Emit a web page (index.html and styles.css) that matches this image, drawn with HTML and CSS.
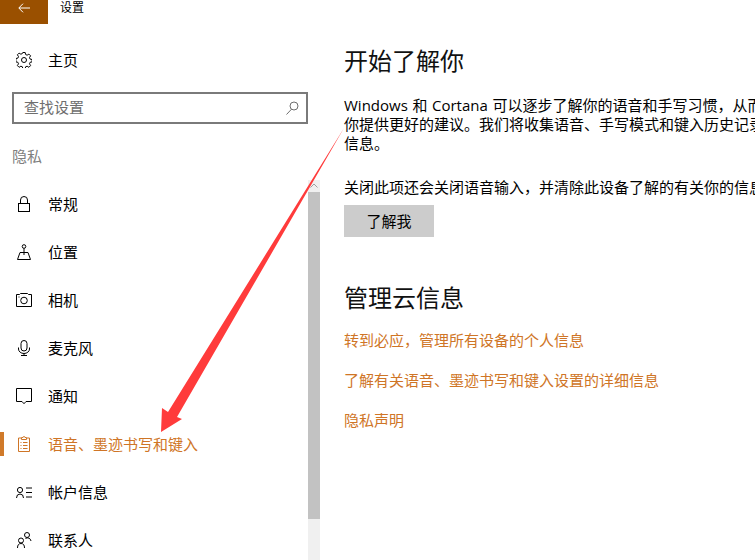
FILE: index.html
```html
<!DOCTYPE html>
<html lang="zh-CN">
<head>
    <meta charset="UTF-8">
    <meta name="viewport" content="width=device-width, initial-scale=1.0">
    <title>设置</title>
    <link rel="stylesheet" href="styles.css">
</head>
<body>
    <div class="window">
        <aside class="sidebar">
            <div class="titlebar">
                <div class="back-btn">
                    <svg width="12" height="10" viewBox="0 0 12 10"><path d="M12 5H1M5 .7L.8 5L5 9.3"/></svg>
                </div>
                <div class="app-title">设置</div>
            </div>

            <div class="home-row">
                <svg class="icon" viewBox="0 0 16 16"><path d="M6.8.5h2.4l.4 2 1.5.7 1.8-1.1 1.7 1.7-1.1 1.8.6 1.5 2 .4v2.4l-2 .4-.6 1.5 1.1 1.8-1.7 1.7-1.8-1.1-1.5.6-.4 2H6.8l-.4-2-1.5-.6-1.8 1.1-1.7-1.7 1.1-1.8-.6-1.5-2-.4V6.500l2-.4.6-1.500-1.100-1.800 1.700-1.700 1.800 1.100 1.500-.7z"/><circle cx="8" cy="8" r="2.500"/></svg>
                <span>主页</span>
            </div>

            <div class="search-box">
                <span>查找设置</span>
                <svg width="13" height="14" viewBox="0 0 13 14"><circle cx="8" cy="5" r="4"/><path d="M5.500 8.200L.5 13.500"/></svg>
            </div>

            <div class="group-label">隐私</div>

            <div class="nav-wrap">
                <ul class="nav-list">
                    <li class="nav-item">
                        <svg class="icon" viewBox="0 0 16 16"><rect x="2.500" y="7.500" width="11" height="8"/><path d="M4.500 7.500V4a3.500 3.500 0 0 1 7 0v3.500"/></svg>
                        <span>常规</span>
                    </li>
                    <li class="nav-item">
                        <svg class="icon" viewBox="0 0 16 16"><circle cx="8" cy="2.500" r="1.800"/><path d="M8 4.300V11M4 8.500h8l2.500 7H1.500z"/></svg>
                        <span>位置</span>
                    </li>
                    <li class="nav-item">
                        <svg class="icon" viewBox="0 0 16 16"><path d="M.5 2.500h3l1-1h7l1 1h3v12H.5z"/><circle cx="8" cy="8.500" r="3.300"/><path d="M2.500 5h1"/></svg>
                        <span>相机</span>
                    </li>
                    <li class="nav-item">
                        <svg class="icon" viewBox="0 0 16 16"><rect x="5" y=".5" width="6" height="10.500" rx="3"/><path d="M2.500 7.500v1.500a5.500 4.500 0 0 0 11 0V7.500M8 13.500v2M5 15.500h6"/></svg>
                        <span>麦克风</span>
                    </li>
                    <li class="nav-item">
                        <svg class="icon" viewBox="0 0 16 16"><path d="M.5.500h15v13H10l-2 2.200-2-2.200H.5z"/></svg>
                        <span>通知</span>
                    </li>
                    <li class="nav-item active">
                        <svg class="icon" viewBox="0 0 16 16"><path d="M5 2H2.500v13.500h11V2H11M5.500 3.500V1.500h1.500a1 1 0 0 1 2 0h1.500v2z"/><path d="M4.500 6.500h1M7 6.500h4.500M4.500 9.500h1M7 9.500h4.500M4.500 12.500h1M7 12.500h4.500"/></svg>
                        <span>语音、墨迹书写和键入</span>
                    </li>
                    <li class="nav-item">
                        <svg class="icon" viewBox="0 0 16 16"><circle cx="4" cy="6" r="2.600"/><path d="M.5 14a3.500 4 0 0 1 7 0M10 4h6M10 8.500h6M10 13h6"/></svg>
                        <span>帐户信息</span>
                    </li>
                    <li class="nav-item">
                        <svg class="icon" viewBox="0 0 16 16"><circle cx="11" cy="3" r="2.500"/><circle cx="5" cy="8.500" r="2.500"/><path d="M1.500 16a3.500 4.500 0 0 1 7 0M9.500 6.500a3.500 3.500 0 0 1 5.500 2.500"/></svg>
                        <span>联系人</span>
                    </li>
                </ul>
                <div class="scrollbar">
                    <div class="scroll-up">
                        <svg width="8" height="5" viewBox="0 0 8 5"><path d="M.5 4.500L4 1l3.500 3.500"/></svg>
                    </div>
                    <div class="scroll-thumb"></div>
                </div>
            </div>
        </aside>

        <main class="content">
            <h2 class="first">开始了解你</h2>
            <p class="intro">Windows 和 Cortana 可以逐步了解你的语音和手写习惯，从而为<br>你提供更好的建议。我们将收集语音、手写模式和键入历史记录等<br>信息。</p>
            <p class="note">关闭此项还会关闭语音输入，并清除此设备了解的有关你的信息</p>
            <button class="action-btn">了解我</button>

            <h2 class="second">管理云信息</h2>
            <a class="link" href="#">转到必应，管理所有设备的个人信息</a>
            <a class="link" href="#">了解有关语音、墨迹书写和键入设置的详细信息</a>
            <a class="link" href="#">隐私声明</a>
        </main>

        <!-- 红色箭头标注 -->
        <svg class="arrow" width="755" height="560" viewBox="0 0 755 560">
            <path d="M344 128L177 417L182 419L161 432L162 408L168 412Z"/>
        </svg>
    </div>
</body>
</html>
```

FILE: styles.css
```css
* {
    margin: 0;
    padding: 0;
    box-sizing: border-box;
}
html, body {
    height: 100%;
    overflow: hidden;
    background-color: #fff;
}
body {
    font-family: "Open Sans", "Noto Sans CJK SC", sans-serif;
    font-size: 15px;
    color: #000;
}
svg {
    fill: none;
    stroke: currentColor;
    stroke-width: 1;
    flex-shrink: 0;
}
.window {
    position: relative;
    display: flex;
    width: 755px;
    height: 560px;
    overflow: hidden;
}
.sidebar {
    display: flex;
    flex-direction: column;
    width: 320px;
    flex-shrink: 0;
}
.titlebar {
    display: flex;
    height: 24px;
}
.back-btn {
    display: flex;
    justify-content: center;
    padding-top: 3px;
    width: 48px;
    height: 24px;
    background-color: #9a5000;
    color: #fff;
}
.app-title {
    margin-left: 12px;
    font-size: 12px;
    line-height: 16px;
}
.home-row {
    display: flex;
    align-items: center;
    height: 48px;
    margin-top: 12px;
    padding-left: 16px;
}
.icon {
    width: 16px;
    height: 16px;
    margin-right: 16px;
}
.home-row span,
.nav-item span {
    margin-top: -2px;
}
.search-box {
    display: flex;
    justify-content: space-between;
    align-items: center;
    width: 296px;
    height: 32px;
    margin: 8px 0 0 12px;
    padding: 0 7px 0 10px;
    border: 2px solid #7a7a7a;
    color: #6e6e6e;
}
.search-box span {
    margin-top: -3px;
}
.group-label {
    margin: 22px 0 0 12px;
    height: 34px;
    line-height: 20px;
    color: #808080;
}
.nav-wrap {
    display: flex;
    flex: 1;
    min-height: 0;
}
.nav-list {
    flex: 1;
    list-style: none;
}
.nav-item {
    position: relative;
    display: flex;
    align-items: center;
    height: 48px;
    padding-left: 16px;
}
.nav-item.active {
    color: #cf7526;
}
.nav-item.active::before {
    content: "";
    position: absolute;
    left: 0;
    top: 12px;
    width: 4px;
    height: 24px;
    background-color: #d07a2a;
}
.scrollbar {
    width: 12px;
    background-color: #f0f0f0;
}
.scroll-up {
    display: flex;
    justify-content: center;
    height: 12px;
    padding-top: 3px;
    color: #a0a0a0;
}
.scroll-thumb {
    height: 327px;
    background-color: #c2c2c2;
}
.content {
    flex: 1;
    padding: 0 0 0 24px;
    white-space: nowrap;
}
h2 {
    font-size: 24px;
    font-weight: 400;
    line-height: 34px;
    color: #111;
}
h2.first {
    margin-top: 44px;
}
h2.second {
    margin-top: 44px;
}
.intro {
    margin-top: 18px;
    line-height: 19px;
    word-spacing: 0.7px;
}
.note {
    margin-top: 24px;
    line-height: 20px;
}
.action-btn {
    display: block;
    width: 90px;
    height: 32px;
    margin-top: 8px;
    padding-bottom: 2px;
    border: none;
    background-color: #ccc;
    font: inherit;
    color: #000;
}
.link {
    display: block;
    height: 20px;
    margin-top: 20px;
    line-height: 20px;
    color: #cf7526;
    text-decoration: none;
}
.second + .link {
    margin-top: 15px;
}
.arrow {
    position: absolute;
    left: 0;
    top: 0;
    fill: #ff3b3b;
    stroke: none;
    pointer-events: none;
}
```
